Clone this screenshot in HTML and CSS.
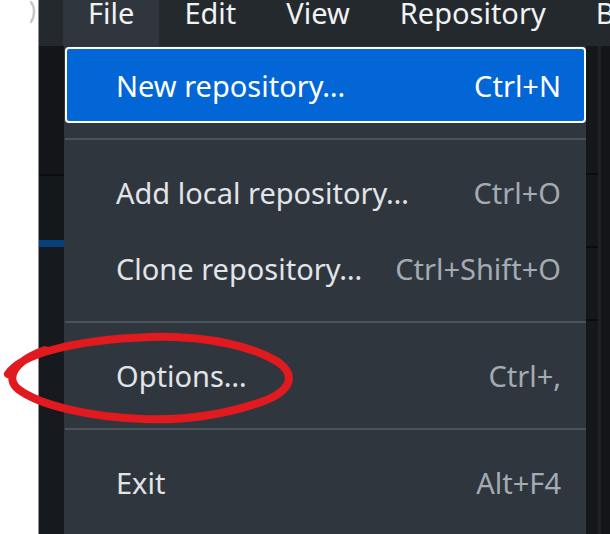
FILE: index.html
```html
<!DOCTYPE html>
<html lang="en">
<head>
<meta charset="utf-8">
<title>File menu</title>
<link rel="stylesheet" href="styles.css">
</head>
<body>
<div class="screen">
  <div class="strip-white">
    <svg class="arc" width="38" height="30" viewBox="0 0 38 30"><path d="M31 2 C35 7, 35 16, 31 22" fill="none" stroke="#c9c9c9" stroke-width="2.5" stroke-linecap="round"/></svg>
  </div>
  <div class="app">
    <div class="menubar">
      <div class="mb-item active">File</div>
      <div class="mb-item">Edit</div>
      <div class="mb-item">View</div>
      <div class="mb-item">Repository</div>
      <div class="mb-item">Branch</div>
    </div>
    <div class="body">
      <div class="side-left">
        <div class="sl-a"></div>
        <div class="sl-line"></div>
        <div class="sl-b"></div>
        <div class="sl-blue"></div>
        <div class="sl-c"></div>
      </div>
      <div class="menu">
        <div class="item selected"><span class="label">New repository…</span><span class="key">Ctrl+N</span></div>
        <div class="sep"></div>
        <div class="item"><span class="label">Add local repository…</span><span class="key">Ctrl+O</span></div>
        <div class="item"><span class="label">Clone repository…</span><span class="key">Ctrl+Shift+O</span></div>
        <div class="sep"></div>
        <div class="item"><span class="label">Options…</span><span class="key">Ctrl+,</span></div>
        <div class="sep"></div>
        <div class="item"><span class="label">Exit</span><span class="key">Alt+F4</span></div>
      </div>
      <div class="side-right">
        <div class="sr-col">
          <div class="sr-seg s1"></div>
          <div class="sr-seg s2"></div>
          <div class="sr-seg s3"></div>
          <div class="sr-seg s4"></div>
        </div>
        <div class="sr-line"></div>
        <div class="sr-end"></div>
      </div>
    </div>
  </div>
  <svg class="annotation" width="610" height="534" viewBox="0 0 610 534">
    <path d="M8 374 C20 355, 70 340, 150 337 C210 335, 255 348, 278 362 C296 375, 292 390, 264 401 C227 414, 187 421, 142 419 C92 417, 40 406, 18 389 C6 379, 12 362, 45 350" fill="none" stroke="#e01a1f" stroke-width="8" stroke-linecap="round" stroke-linejoin="round"/>
  </svg>
</div>
</body>
</html>
```
FILE: styles.css
```css
html, body {
  margin: 0;
  padding: 0;
  background: #ffffff;
}
.screen {
  position: relative;
  width: 610px;
  height: 534px;
  display: flex;
  overflow: hidden;
  font-family: "Noto Sans", "Open Sans", sans-serif;
  font-size: 29px;
}
.strip-white {
  position: relative;
  width: 38px;
  flex: none;
  background: #ffffff;
}
.arc {
  position: absolute;
  left: 0;
  top: 0;
}
.app {
  flex: 1;
  display: flex;
  flex-direction: column;
  border-left: 1px solid #8d8f92;
  background: #141619;
  min-width: 0;
}
.menubar {
  height: 46px;
  flex: none;
  display: flex;
  background: #24292e;
  padding-left: 24px;
  white-space: nowrap;
}
.mb-item {
  padding: 0 25px;
  color: #f0f2f4;
  line-height: 25px;
  height: 46px;
  box-sizing: border-box;
}
.mb-item.active {
  background: #2f363d;
}
.body {
  flex: 1;
  display: flex;
  min-height: 0;
}
.side-left {
  width: 25px;
  flex: none;
  display: flex;
  flex-direction: column;
}
.sl-a { height: 128px; background: #131518; }
.sl-line { height: 2px; background: #0b0c0e; }
.sl-b { height: 64px; background: #15181b; }
.sl-blue { height: 7px; background: #06407f; }
.sl-c { flex: 1; background: #16191d; }
.menu {
  width: 522px;
  flex: none;
  background: #2f363d;
  padding: 1px 0 0 1px;
  box-sizing: border-box;
}
.item {
  height: 76px;
  box-sizing: border-box;
  display: flex;
  align-items: center;
  justify-content: space-between;
  padding: 0 25px 0 51px;
  white-space: nowrap;
}
.label { color: #e1e4e8; }
.key { color: #a3abb4; }
.item.selected {
  background: #0366d6;
  border: 2px solid #ffffff;
  border-radius: 4px;
  padding: 0 23px 0 49px;
}
.item.selected .label,
.item.selected .key { color: #ffffff; }
.sep {
  height: 2px;
  background: #4a525a;
  margin: 15px 0 14px;
}
.side-right {
  flex: 1;
  display: flex;
}
.sr-col {
  width: 12px;
  display: flex;
  flex-direction: column;
}
.sr-seg { background: #15181b; border-bottom: 2px solid #0b0c0e; }
.s1 { height: 127px; }
.s2 { height: 71px; }
.s3 { height: 71px; }
.s4 { flex: 1; border-bottom: 0; }
.sr-line { width: 3px; background: #1f2327; }
.sr-end { flex: 1; background: #131518; }
.annotation {
  position: absolute;
  left: 0;
  top: 0;
  pointer-events: none;
}
```
